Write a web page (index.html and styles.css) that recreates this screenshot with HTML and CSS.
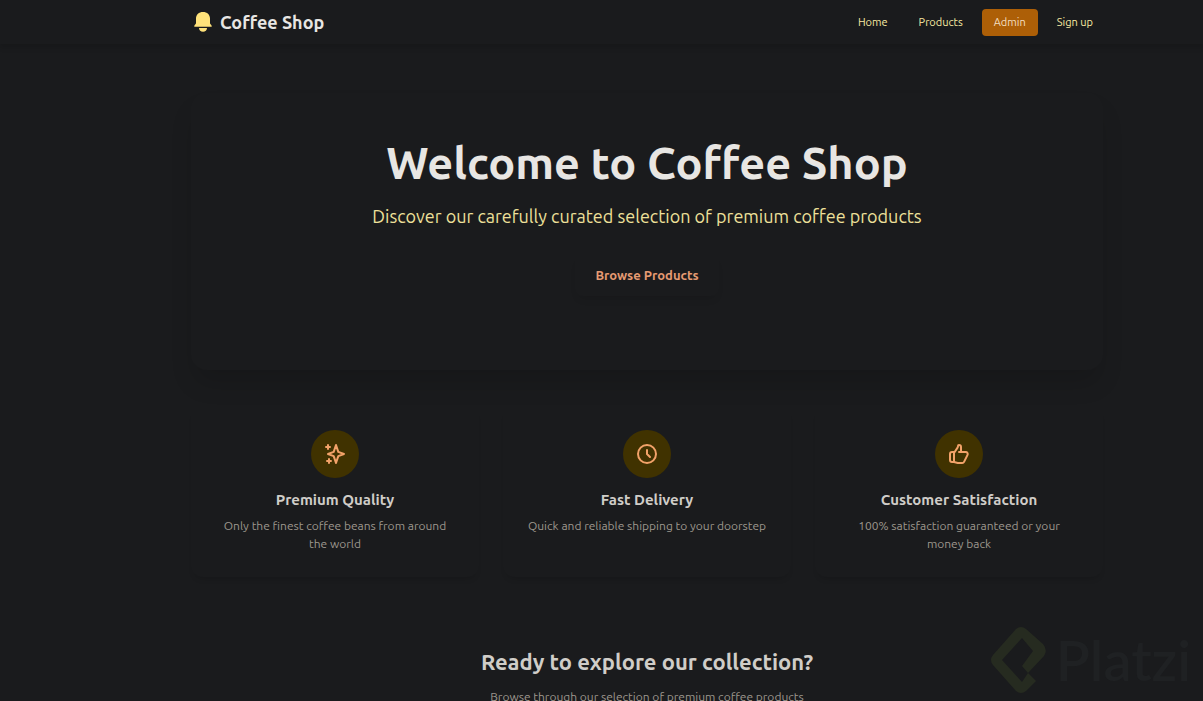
FILE: index.html
```
<!DOCTYPE html>
<html lang="en">
<head>
  <meta charset="utf-8">
  <meta name="viewport" content="width=device-width, initial-scale=1">
  <title>Coffee Shop</title>
  <link rel="stylesheet" href="styles.css">
</head>
<body>
  <header class="topbar">
    <a class="brand" href="#">
      <svg class="brand-icon" viewBox="0 0 18 20" aria-hidden="true">
        <path d="M9 0C4.900 0 2 2.700 2 6.500V11C2 12.300 .3 13 .3 14V14.700H17.700V14C17.700 13 16 12.300 16 11V6.500C16 2.700 13.100 0 9 0Z"/>
        <path d="M5 16H13C13 18.200 11.300 19.700 9 19.700S5 18.200 5 16Z"/>
      </svg>
      <span>Coffee Shop</span>
    </a>
    <nav class="menu">
      <a class="menu-link" href="#">Home</a>
      <a class="menu-link" href="#">Products</a>
      <a class="menu-link menu-link-active" href="#">Admin</a>
      <a class="menu-link" href="#">Sign up</a>
    </nav>
  </header>

  <main class="content">
    <section class="hero">
      <h1 class="hero-title">Welcome to Coffee Shop</h1>
      <p class="hero-text">Discover our carefully curated selection of premium coffee products</p>
      <a class="hero-button" href="#">Browse Products</a>
    </section>

    <section class="features">
      <article class="feature">
        <div class="feature-icon">
          <svg viewBox="0 0 24 24" aria-hidden="true"><path d="M5 3v4M3 5h4M6 17v4M4 19h4M13 3l2.286 6.857L21 12l-5.714 2.143L13 21l-2.286-6.857L5 12l5.714-2.143L13 3z"/></svg>
        </div>
        <h2 class="feature-title">Premium Quality</h2>
        <p class="feature-text">Only the finest coffee beans from around the world</p>
      </article>
      <article class="feature">
        <div class="feature-icon">
          <svg viewBox="0 0 24 24" aria-hidden="true"><path d="M12 8v4l3 3m6-3a9 9 0 11-18 0 9 9 0 0118 0z"/></svg>
        </div>
        <h2 class="feature-title">Fast Delivery</h2>
        <p class="feature-text">Quick and reliable shipping to your doorstep</p>
      </article>
      <article class="feature">
        <div class="feature-icon">
          <svg viewBox="0 0 24 24" aria-hidden="true"><path d="M14 10h4.764a2 2 0 011.789 2.894l-3.500 7A2 2 0 0115.263 21h-4.017c-.163 0-.326-.02-.485-.06L7 20m7-10V5a2 2 0 00-2-2h-.095c-.5 0-.905.405-.905.905 0 .714-.211 1.412-.608 2.006L7 11v9m7-10h-2M7 20H5a2 2 0 01-2-2v-6a2 2 0 012-2h2.500"/></svg>
        </div>
        <h2 class="feature-title">Customer Satisfaction</h2>
        <p class="feature-text">100% satisfaction guaranteed or your money back</p>
      </article>
    </section>

    <section class="explore">
      <h2 class="explore-title">Ready to explore our collection?</h2>
      <p class="explore-text">Browse through our selection of premium coffee products</p>
    </section>
  </main>

  <div class="watermark">
    <svg class="watermark-icon" viewBox="0 0 56 66" aria-hidden="true"><path fill-rule="evenodd" d="M26 2Q31-2 36 2L53 17Q58 23 54 29L38 46L46 54L36 64Q31 68 26 64L3 38Q-1 33 3 28ZM32 11L43 24L32 39L38 46L32 55L12 33Z"/></svg>
    <span class="watermark-name">Platzi</span>
  </div>
</body>
</html>
```

FILE: styles.css
```
* {
  box-sizing: border-box;
}

body {
  margin: 0;
  background: #1a1b1d;
  color: #e8e6e3;
  font-family: Ubuntu, "Noto Sans", "Open Sans", sans-serif;
}

h1,
h2,
p {
  margin: 0;
}

a {
  color: inherit;
  text-decoration: none;
}

.topbar {
  display: flex;
  align-items: center;
  justify-content: space-between;
  height: 44px;
  padding: 0 98px 0 194px;
  box-shadow: 0 4px 5px rgba(0, 0, 0, 0.12);
}

.brand {
  display: flex;
  align-items: center;
  gap: 8px;
  font-size: 18px;
  font-weight: 600;
  line-height: 20px;
}

.brand-icon {
  width: 18px;
  height: 20px;
  fill: #ffe27a;
}

.menu {
  display: flex;
  gap: 7px;
}

.menu-link {
  padding: 0 12px;
  border-radius: 4px;
  color: #f8eaa2;
  font-size: 11px;
  line-height: 27px;
}

.menu-link-active {
  background: #ad5f07;
  color: #f4dfc0;
}

.content {
  padding: 49px 100px 0 191px;
}

.hero {
  display: flex;
  flex-direction: column;
  align-items: center;
  padding: 40px 24px 74px;
  border-radius: 16px;
  box-shadow: 0 16px 24px -4px rgba(0, 0, 0, 0.15);
  text-align: center;
}

.hero-title {
  font-size: 45px;
  font-weight: 600;
  line-height: 60px;
}

.hero-text {
  margin-top: 8px;
  color: #eee09a;
  font-size: 18px;
  line-height: 30px;
}

.hero-button {
  margin-top: 23px;
  padding: 0 20px;
  border-radius: 8px;
  box-shadow: 0 6px 8px -4px rgba(0, 0, 0, 0.12);
  color: #e59a72;
  font-size: 13px;
  font-weight: 600;
  line-height: 42px;
}

.features {
  display: grid;
  grid-template-columns: repeat(3, 1fr);
  gap: 24px;
  margin-top: 36px;
}

.feature {
  display: flex;
  flex-direction: column;
  align-items: center;
  padding: 24px;
  border-radius: 12px;
  box-shadow: 0 5px 6px -4px rgba(0, 0, 0, 0.18);
  text-align: center;
}

.feature-icon {
  display: grid;
  place-items: center;
  width: 48px;
  height: 48px;
  border-radius: 50%;
  background: #403200;
}

.feature-icon svg {
  width: 24px;
  height: 24px;
  fill: none;
  stroke: #f2a269;
  stroke-width: 2;
  stroke-linecap: round;
  stroke-linejoin: round;
}

.feature-title {
  margin-top: 12px;
  color: #d0cdc8;
  font-size: 15px;
  font-weight: 600;
  line-height: 20px;
}

.feature-text {
  margin-top: 7px;
  color: #9d978d;
  font-size: 12px;
  line-height: 18px;
}

.explore {
  padding-top: 69px;
  text-align: center;
}

.explore-title {
  color: #d0cdc8;
  font-size: 22px;
  font-weight: 600;
  line-height: 32px;
}

.explore-text {
  margin-top: 10px;
  color: #9d978d;
  font-size: 12px;
  line-height: 18px;
}

.watermark {
  position: fixed;
  right: 12px;
  bottom: 8px;
  display: flex;
  align-items: center;
  gap: 10px;
}

.watermark-icon {
  width: 56px;
  height: 66px;
  fill: #262b20;
}

.watermark-name {
  color: #1f2123;
  font-family: Lato, sans-serif;
  font-size: 56px;
  font-weight: 600;
  line-height: 66px;
}
```
